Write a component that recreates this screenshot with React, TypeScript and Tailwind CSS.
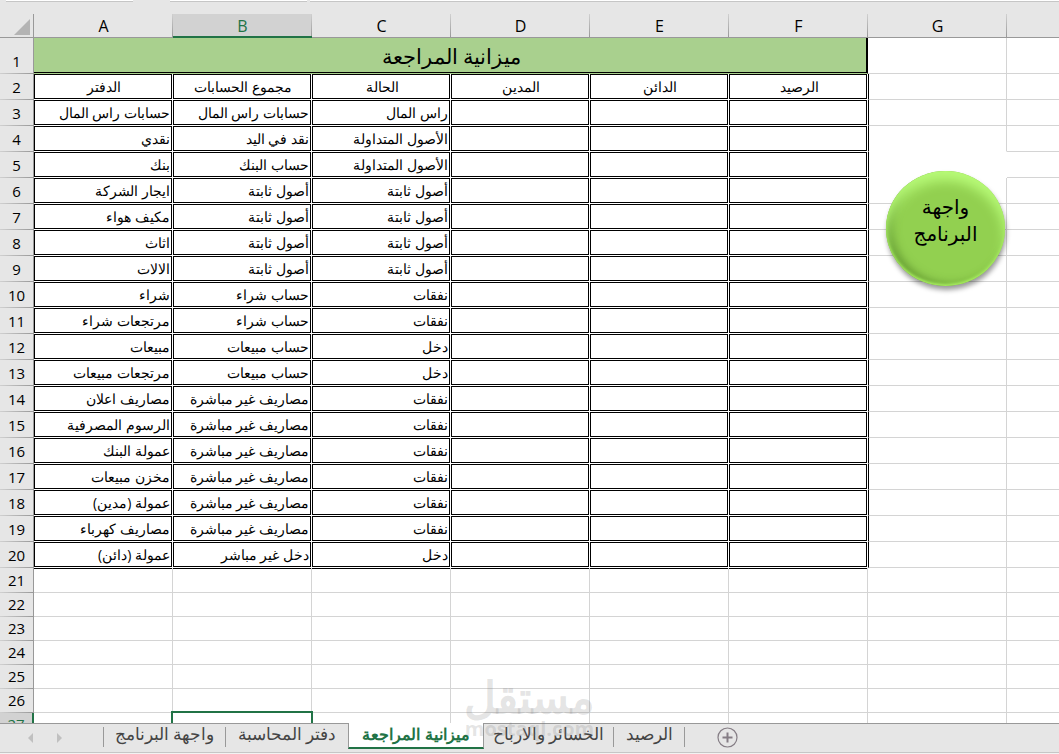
import React from 'react';
import clsx from 'clsx';

const columns = ['A', 'B', 'C', 'D', 'E', 'F', 'G'];

const headings = ['الدفتر', 'مجموع الحسابات', 'الحالة', 'المدين', 'الدائن', 'الرصيد'];

const accounts = [
  ['حسابات راس المال', 'حسابات راس المال', 'راس المال'],
  ['نقدي', 'نقد في اليد', 'الأصول المتداولة'],
  ['بنك', 'حساب البنك', 'الأصول المتداولة'],
  ['ايجار الشركة', 'أصول ثابتة', 'أصول ثابتة'],
  ['مكيف هواء', 'أصول ثابتة', 'أصول ثابتة'],
  ['اثاث', 'أصول ثابتة', 'أصول ثابتة'],
  ['الالات', 'أصول ثابتة', 'أصول ثابتة'],
  ['شراء', 'حساب شراء', 'نفقات'],
  ['مرتجعات شراء', 'حساب شراء', 'نفقات'],
  ['مبيعات', 'حساب مبيعات', 'دخل'],
  ['مرتجعات مبيعات', 'حساب مبيعات', 'دخل'],
  ['مصاريف اعلان', 'مصاريف غير مباشرة', 'نفقات'],
  ['الرسوم المصرفية', 'مصاريف غير مباشرة', 'نفقات'],
  ['عمولة البنك', 'مصاريف غير مباشرة', 'نفقات'],
  ['مخزن مبيعات', 'مصاريف غير مباشرة', 'نفقات'],
  ['عمولة (مدين)', 'مصاريف غير مباشرة', 'نفقات'],
  ['مصاريف كهرباء', 'مصاريف غير مباشرة', 'نفقات'],
  ['عمولة (دائن)', 'دخل غير مباشر', 'دخل'],
];

const emptyRows = [21, 22, 23, 24, 25, 26, 27];

const tabs = [
  { title: 'واجهة البرنامج', width: 'w-[122px]' },
  { title: 'دفتر المحاسبة', width: 'w-[122px]' },
  { title: 'ميزانية المراجعة', width: 'w-[136px]', active: true },
  { title: 'الخسائر والارباح', width: 'w-[130px]' },
  { title: 'الرصيد', width: 'w-[71px]' },
];

const gridCell = 'border-r border-b border-[#d4d4d4]';
// white gap on the outside + black inset line = double border between cells
const boxedCell = 'border-r border-b border-white shadow-[inset_0_0_0_1px_#000] px-[3px] whitespace-nowrap';

function RowHeader({ n, active = false }: { n: number; active?: boolean }) {
  return (
    <th
      scope="row"
      className={clsx(
        'pb-[2px] text-center align-bottom text-[15px] leading-[22px] font-normal bg-no-repeat bg-bottom bg-[length:100%_1px] bg-[linear-gradient(to_right,#d0d0d0,#999)]',
        active ? 'bg-[#d2d2d2] text-[#217346] border-r-2 border-[#217346]' : 'bg-[#e6e6e6] border-r border-[#999]'
      )}
    >
      {n}
    </th>
  );
}

function SideCells({ row }: { row: number }) {
  const boxed = row >= 2 && row <= 20;
  return (
    <>
      <td
        className={clsx(
          'relative border-r border-b',
          boxed && 'border-l border-l-black',
          row === 4 && 'border-r-[#d4d4d4] border-b-white',
          row === 5 && 'border-r-white border-b-white',
          row !== 4 && row !== 5 && 'border-r-[#d4d4d4] border-b-[#d4d4d4]'
        )}
      >
        {row === 5 && (
          <button
            dir="rtl"
            className="absolute z-10 left-[17px] top-[19px] w-[119px] h-[115px] px-5 pb-4 rounded-[50%] text-[20px] leading-[27px] font-['Liberation_Sans','DejaVu_Sans',sans-serif] bg-[#92d050] shadow-[1px_4px_5px_rgba(0,0,0,0.4),inset_0_-2px_3px_#a8ee60,inset_0_10px_12px_#b8fb78,inset_6px_-2px_8px_rgba(70,120,30,0.6)]"
          >
            واجهة البرنامج
          </button>
        )}
      </td>
      <td className="border-b border-[#d4d4d4]" />
    </>
  );
}

function Sheet() {
  return (
    <table className="w-full table-fixed border-separate border-spacing-0">
      <colgroup>
        <col className="w-[34px]" />
        {columns.map((c) => (
          <col key={c} className="w-[139px]" />
        ))}
        <col />
      </colgroup>
      <thead>
        <tr className="h-[24px] bg-[#e6e6e6]">
          <th className="border-b border-r border-[#999] p-0">
            <svg className="ml-[14px] mt-[2px]" width="16" height="16" viewBox="0 0 16 16">
              <path d="M16 0V16H0Z" fill="#b4b4b4" />
            </svg>
          </th>
          {columns.map((c) => (
            <th
              key={c}
              scope="col"
              className={clsx(
                'border-b text-[16px] leading-[22px] font-normal bg-no-repeat bg-right bg-[length:1px_100%] bg-[linear-gradient(#d0d0d0,#999)]',
                c === 'B' ? 'bg-[#d2d2d2] text-[#217346] border-[#217346] shadow-[inset_0_-1px_0_#217346]' : 'border-[#999]'
              )}
            >
              {c}
            </th>
          ))}
          <th className="border-b border-[#999]" />
        </tr>
      </thead>
      <tbody>
        <tr className="h-[36px]">
          <RowHeader n={1} />
          <td
            colSpan={6}
            dir="rtl"
            className="text-center text-[21px] leading-[34px] bg-[#a9d08e] border-r border-r-black border-b border-b-[#a9d08e] shadow-[inset_-1px_-1px_0_#000]"
          >
            ميزانية المراجعة
          </td>
          <SideCells row={1} />
        </tr>
        <tr className="h-[26px]">
          <RowHeader n={2} />
          {headings.map((h) => (
            <td key={h} dir="rtl" className={clsx(boxedCell, 'text-center text-[14px] leading-[24px]')}>
              {h}
            </td>
          ))}
          <SideCells row={2} />
        </tr>
        {accounts.map((account, i) => (
          <tr key={i} className="h-[26px]">
            <RowHeader n={i + 3} />
            {account.map((text, j) => (
              <td key={j} dir="rtl" className={clsx(boxedCell, 'text-right text-[14px] leading-[24px]')}>
                {text}
              </td>
            ))}
            <td className={boxedCell} />
            <td className={boxedCell} />
            <td className={boxedCell} />
            <SideCells row={i + 3} />
          </tr>
        ))}
        {emptyRows.map((n) => (
          <tr key={n} className={n === 21 ? 'h-[25px]' : 'h-[24px]'}>
            <RowHeader n={n} active={n === 27} />
            {columns.slice(0, 6).map((c) => (
              <td key={c} className={clsx(gridCell, 'relative', n === 21 && 'shadow-[inset_0_1px_0_#000]')}>
                {n === 27 && c === 'B' && (
                  <div className="absolute z-10 -left-[2px] -top-[2px] w-[142px] h-[27px] border-2 border-[#217346]" />
                )}
              </td>
            ))}
            <SideCells row={n} />
          </tr>
        ))}
      </tbody>
    </table>
  );
}

function TabBar() {
  return (
    <div className="shrink-0 h-[31px] flex items-start bg-[#e6e6e6] border-t border-[#999] shadow-[inset_0_-1px_0_#f2f2f2,inset_0_-2px_0_#c6c6c6]">
      <div className="flex w-[103px] h-[27px] items-center pl-[27px] gap-[20px]">
        <button aria-label="Previous sheet">
          <svg width="8" height="10" viewBox="0 0 8 10">
            <path d="M6 0V10L1 5Z" fill="#c0c0c0" />
          </svg>
        </button>
        <button aria-label="Next sheet">
          <svg width="8" height="10" viewBox="0 0 8 10">
            <path d="M2 0V10L7 5Z" fill="#c0c0c0" />
          </svg>
        </button>
      </div>
      <div className="w-px h-[20px] mt-[3px] bg-[#999]" />
      {tabs.map((tab, i) => (
        <button
          key={tab.title}
          dir="rtl"
          className={clsx(
            'relative whitespace-nowrap',
            tab.width,
            tab.active
              ? '-mt-px h-[26px] pb-[2px] text-[16px] leading-[22px] bg-white text-[#217346] font-bold border-x border-x-[#999] border-b-2 border-b-[#217346]'
              : 'h-[20px] mt-[3px] pb-[6px] text-[17px] leading-[14px] text-[#444]',
            !tab.active && i !== 1 && 'border-r border-[#999]'
          )}
        >
          {tab.title}
        </button>
      ))}
      <button aria-label="New sheet" className="ml-[32px] mt-[3px]">
        <svg width="21" height="21" viewBox="0 0 21 21" fill="none" stroke="#857d85">
          <circle cx="10.500" cy="10.500" r="9.500" strokeWidth="1.200" />
          <path d="M10.500 5.500V15.500M5.500 10.500H15.500" strokeWidth="2" />
        </svg>
      </button>
    </div>
  );
}

export default function App() {
  return (
    <div className="relative h-screen flex flex-col overflow-hidden bg-white text-black font-['Open_Sans','Noto_Sans',sans-serif]">
      <div className="shrink-0 h-[14px] flex items-start bg-[#e6e6e6]">
        <div className="ml-[6px] w-[127px] h-[2px] bg-white border-b border-[#c6c6c6]" />
        <div className="ml-[37px] w-[137px] h-[2px] bg-white border-b border-[#c6c6c6]" />
        <div className="ml-[3px] flex-1 h-[2px] bg-white border-b border-[#c6c6c6]" />
      </div>
      <div className="flex-1 min-h-0 overflow-hidden">
        <Sheet />
      </div>
      <TabBar />
      <div className="absolute z-20 inset-x-0 bottom-[14px] flex flex-col items-center font-bold text-[#787878]/20 pointer-events-none">
        <span dir="rtl" className="text-[44px] leading-[44px]">مستقل</span>
        <span className="text-[20px] leading-[22px]">mostaql.com</span>
      </div>
    </div>
  );
}
